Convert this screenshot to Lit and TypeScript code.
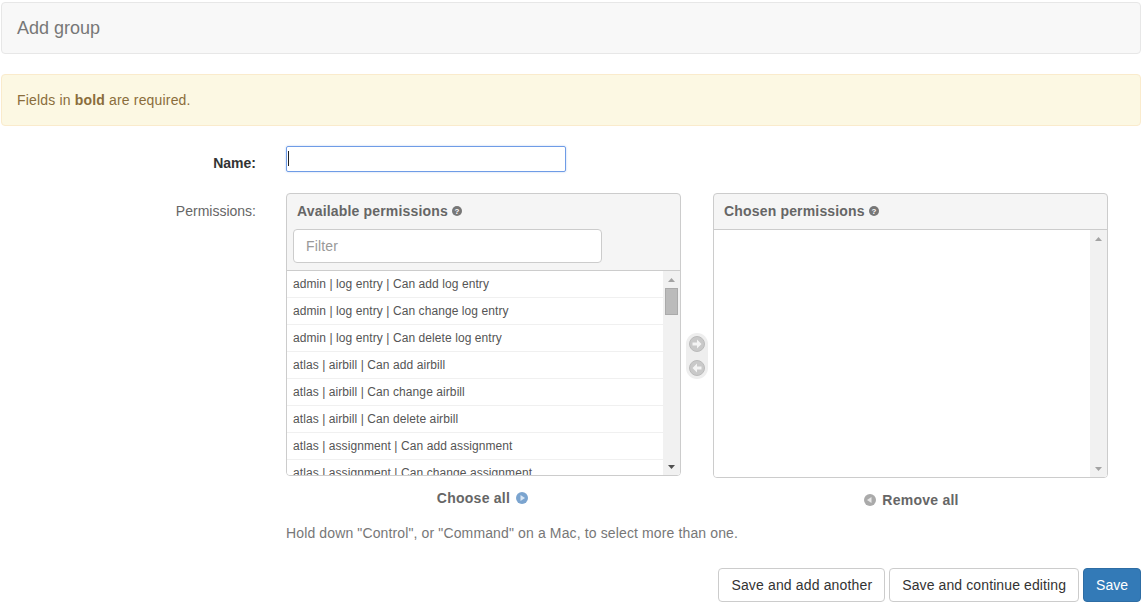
import { LitElement, html, css, svg } from "lit";
import { customElement } from "lit/decorators.js";

const ITEMS = [
  "admin | log entry | Can add log entry",
  "admin | log entry | Can change log entry",
  "admin | log entry | Can delete log entry",
  "atlas | airbill | Can add airbill",
  "atlas | airbill | Can change airbill",
  "atlas | airbill | Can delete airbill",
  "atlas | assignment | Can add assignment",
  "atlas | assignment | Can change assignment",
];

@customElement("app-root")
export class AppRoot extends LitElement {
  static styles = css`
    :host { display: block; width: 1145px; height: 610px; overflow: hidden; background: #fff; font-family: "Liberation Sans", Arial, sans-serif; font-size: 14px; color: #333; }
    .page { padding: 2px 4px 0 1px; display: flex; flex-direction: column; }
    .head { height: 50px; border: 1px solid #e7e7e7; border-radius: 4px; background: #f8f8f8; display: flex; align-items: center; padding-left: 15px; font-size: 18px; color: #777; }
    .alert { margin-top: 20px; height: 50px; border: 1px solid #faebcc; border-radius: 4px; background: #fcf8e3; color: #8a6d3b; display: flex; align-items: center; padding-left: 15px; letter-spacing: 0.17px; }
    .row { display: flex; margin-top: 20px; }
    .row.perms { margin-top: 21px; }
    .label { width: 255px; text-align: right; flex: none; }
    .label.name { font-weight: bold; line-height: 26px; height: 26px; box-sizing: border-box; padding-top: 4px; }
    .label.perm { color: #666; padding-top: 10px; }
    .input { margin-left: 30px; width: 280px; height: 26px; box-sizing: border-box; border: 1px solid #6f9ce6; border-radius: 2px; box-shadow: 0 0 2px rgba(111,156,230,.5); display:flex; align-items:center; padding-left: 1px; }
    .caret { width: 1px; height: 15px; background: #222; margin-top: -2px; }
    .selector { margin-left: 30px; display: flex; flex-direction: column; }
    .cols { display: flex; }
    .box { width: 395px; box-sizing: border-box; }
    .panel { border: 1px solid #ccc; border-radius: 4px; background: #f5f5f5; width: 395px; box-sizing: border-box; overflow: hidden; }
    .title { font-weight: bold; color: #666; padding: 9px 10px 10px; line-height: 16px; display: flex; align-items: center; gap: 4px; letter-spacing: 0.17px; }
    .filter { margin: 0 6px 7px; width: 309px; height: 34px; box-sizing: border-box; border: 1px solid #ccc; border-radius: 4px; background: #fff; color: #999; padding-left: 12px; display: flex; align-items: center; letter-spacing: 0.14px; }
    .list { height: 204px; background: #fff; border-top: 1px solid #ccc; display: flex; overflow: hidden; }
    .items { flex: 1; min-width: 0; overflow: hidden; }
    .item { height: 27px; box-sizing: border-box; border-bottom: 1px solid #f0f0f0; padding-left: 6px; font-size: 12px; line-height: 26px; color: #555; white-space: nowrap; letter-spacing: 0.08px; }
    .sb { width: 17px; flex: none; background: #f1f1f1; display: flex; flex-direction: column; align-items: center; position: relative; }
    .tri { width: 17px; height: 17px; display: flex; align-items: center; justify-content: center; }
    .thumb { position: absolute; top: 17px; left: 2px; width: 13px; height: 27px; box-sizing: border-box; background: #bbb; border: 1px solid #aaa; }
    .spacer { flex: 1; }
    .mid { width: 32px; display: flex; flex-direction: column; align-items: center; justify-content: center; flex: none; padding-top: 10px; box-sizing: border-box; }
    .pill { width: 22px; height: 46px; border-radius: 11px; background: #eee; display: flex; flex-direction: column; align-items: center; justify-content: center; gap: 8px; }
    .chosen .list { height: 247px; }
    .foot { font-weight: bold; color: #666; display: flex; align-items: center; justify-content: center; gap: 6px; height: 16px; margin-top: 14px; letter-spacing: 0.25px; }
    .foot.left { padding-right: 2px; }
    .foot.right { padding-left: 2px; }
    .help { margin-top: 17px; color: #777; letter-spacing: 0.13px; }
    .actions { margin-top: 27px; display: flex; justify-content: flex-end; gap: 4px; }
    .btn { height: 34px; box-sizing: border-box; border: 1px solid #ccc; border-radius: 4px; background: #fff; color: #333; padding: 0 12px; display: flex; align-items: center; letter-spacing: 0.15px; }
    .btn.tight { letter-spacing: 0.11px; }
    .btn.primary { background: #337ab7; border-color: #2e6da4; color: #fff; letter-spacing: 0; }
    svg { display: block; flex: none; }
  `;

  q() {
    return html`<svg width="10" height="10" viewBox="0 0 10 10"><circle cx="5" cy="5" r="5" fill="#777"/><text x="5" y="8" text-anchor="middle" font-size="8" font-weight="bold" fill="#fff" font-family="Liberation Sans">?</text></svg>`;
  }
  play(fill: string, tip: string, dir: "l" | "r") {
    const d = dir === "r" ? "M4.5 3l4.5 3-4.5 3z" : "M7.5 3L3 6l4.5 3z";
    return html`<svg width="12" height="12" viewBox="0 0 12 12"><circle cx="6" cy="6" r="6" fill=${fill}/><path d=${d} fill=${tip}/></svg>`;
  }
  move(dir: "l" | "r") {
    const d = dir === "r"
      ? "M3.5 6.5h4.5V3.5L12.5 8 8 12.500V9.500H3.500z"
      : "M12.500 6.500H8V3.500L3.500 8 8 12.500V9.500h4.500z";
    return html`<svg width="16" height="16" viewBox="0 0 16 16"><circle cx="8" cy="8" r="7.500" fill="#c9c9c9" stroke="#bbb"/><path d=${d} fill="#f4f4f4"/></svg>`;
  }
  tri(up: boolean, c: string) {
    return html`<div class="tri"><svg width="7" height="4" viewBox="0 0 7 4">${svg`<path d=${up ? "M3.500 0L7 4H0z" : "M0 0h7L3.500 4z"} fill=${c}/>`}</svg></div>`;
  }

  render() {
    return html`<div class="page">
      <div class="head">Add group</div>
      <div class="alert"><span>Fields in <b>bold</b> are required.</span></div>
      <div class="row"><div class="label name">Name:</div><div class="input"><div class="caret"></div></div></div>
      <div class="row perms">
        <div class="label perm">Permissions:</div>
        <div class="selector">
          <div class="cols">
            <div class="box">
              <div class="panel">
                <div class="title">Available permissions ${this.q()}</div>
                <div class="filter">Filter</div>
                <div class="list">
                  <div class="items">${ITEMS.map((i) => html`<div class="item">${i}</div>`)}</div>
                  <div class="sb">${this.tri(true, "#a3a3a3")}<div class="thumb"></div><div class="spacer"></div>${this.tri(false, "#505050")}</div>
                </div>
              </div>
              <div class="foot left">Choose all ${this.play("#7ba4cf", "#d9e6f4", "r")}</div>
            </div>
            <div class="mid"><div class="pill">${this.move("r")}${this.move("l")}</div></div>
            <div class="box chosen">
              <div class="panel">
                <div class="title">Chosen permissions ${this.q()}</div>
                <div class="list">
                  <div class="items"></div>
                  <div class="sb">${this.tri(true, "#a3a3a3")}<div class="spacer"></div>${this.tri(false, "#a3a3a3")}</div>
                </div>
              </div>
              <div class="foot right">${this.play("#aaa", "#e8e8e8", "l")} Remove all</div>
            </div>
          </div>
          <div class="help">Hold down "Control", or "Command" on a Mac, to select more than one.</div>
        </div>
      </div>
      <div class="actions">
        <div class="btn">Save and add another</div>
        <div class="btn tight">Save and continue editing</div>
        <div class="btn primary">Save</div>
      </div>
    </div>`;
  }
}
